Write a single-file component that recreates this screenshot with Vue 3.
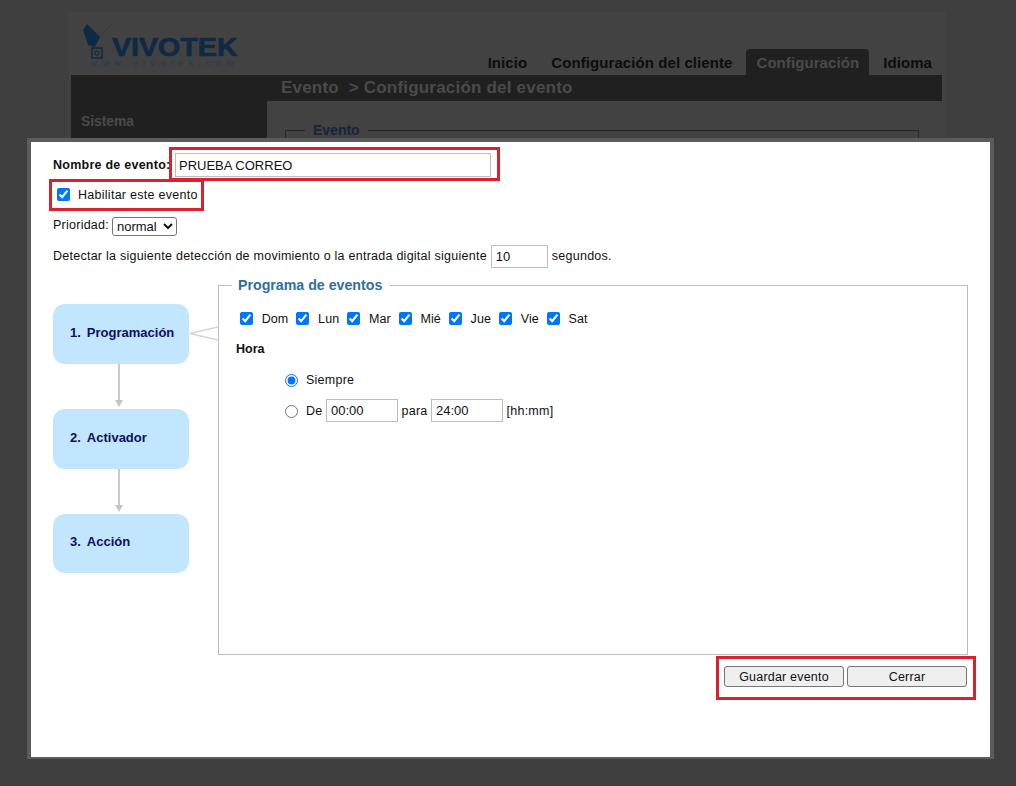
<script setup>
const tabs = [
  { label: 'Inicio', active: false },
  { label: 'Configuración del cliente', active: false },
  { label: 'Configuración', active: true },
  { label: 'Idioma', active: false },
]
const days = ['Dom', 'Lun', 'Mar', 'Mié', 'Jue', 'Vie', 'Sat']
const steps = ['Programación', 'Activador', 'Acción']
</script>

<template>
  <div class="page">
    <div class="site">
      <header class="site-head">
        <div class="logo">
          <svg class="logo-mark" width="31" height="35" viewBox="0 0 31 35">
            <path d="M2 6 L6 0 L19 13 L14 23 L7 21 Z" fill="#0e2a44" />
            <path d="M20 11 L31 0" stroke="#2c3d4c" stroke-width="1" />
            <rect x="11" y="24" width="10" height="10" fill="none" stroke="#1b3044" stroke-width="2" />
            <circle cx="16" cy="29" r="2" fill="none" stroke="#1b3044" stroke-width="1.500" />
          </svg>
          <div class="logo-words">
            <span class="logo-name">VIVOTEK</span>
            <span class="logo-url">www.vivotek.com</span>
          </div>
        </div>
        <nav class="tabs">
          <span v-for="t in tabs" :key="t.label" class="tab" :class="{ active: t.active }">{{ t.label }}</span>
        </nav>
      </header>
      <div class="crumb">Evento &nbsp;&gt; Configuración del evento</div>
      <div class="site-body">
        <aside class="side">Sistema</aside>
        <section class="under">
          <div class="under-box"><span class="under-legend">Evento</span></div>
        </section>
      </div>
    </div>

    <div class="modal">
      <div class="row-name">
        <label class="name-label">Nombre de evento:</label>
        <input class="name-input" type="text" value="PRUEBA CORREO" />
        <span class="mark mark-name"></span>
      </div>
      <div class="row-enable">
        <label class="enable"><input type="checkbox" checked /> <span>Habilitar este evento</span></label>
        <span class="mark mark-enable"></span>
      </div>
      <div class="row-priority">
        <span class="lift2">Prioridad:</span>
        <select class="priority"><option>normal</option></select>
      </div>
      <div class="row-detect">
        <span class="lift1">Detectar la siguiente detección de movimiento o la entrada digital siguiente</span>
        <input class="detect-input" type="text" value="10" />
        <span class="lift1">segundos.</span>
      </div>

      <div class="main">
        <div class="steps">
          <template v-for="(s, i) in steps" :key="s">
            <div class="step"><span class="num">{{ i + 1 }}.</span>{{ s }}</div>
            <svg v-if="i < 2" class="arrow" width="12" height="45" viewBox="0 0 12 45">
              <path d="M6 0 V37" stroke="#c9c9c5" stroke-width="2" />
              <path d="M2 36 H10 L6 43 Z" fill="#c4c4c0" />
            </svg>
          </template>
          <svg class="wedge" width="29" height="16" viewBox="0 0 29 16">
            <path d="M29 1 L1 7.500 L29 14" fill="none" stroke="#d6d6d2" stroke-width="1.500" />
          </svg>
        </div>
        <fieldset class="panel">
          <legend>Programa de eventos</legend>
          <div class="days">
            <label v-for="d in days" :key="d" class="day"><input type="checkbox" checked /><span>{{ d }}</span></label>
          </div>
          <div class="hora">Hora</div>
          <div class="times">
            <label class="time-row first"><input type="radio" name="t" checked /><span>Siempre</span></label>
            <div class="time-row">
              <input type="radio" name="t" />
              <span>De</span>
              <input class="time-input" type="text" value="00:00" />
              <span>para</span>
              <input class="time-input" type="text" value="24:00" />
              <span>[hh:mm]</span>
            </div>
          </div>
        </fieldset>
      </div>

      <div class="actions">
        <button type="button">Guardar evento</button>
        <button type="button">Cerrar</button>
        <span class="mark mark-actions"></span>
      </div>
    </div>
  </div>
</template>

<style>
html, body { margin: 0; background: #3f3f3f; }
</style>

<style scoped>
.page {
  position: relative;
  width: 1016px;
  height: 786px;
  overflow: hidden;
  background: #3f3f3f;
  font-family: "Liberation Sans", Arial, sans-serif;
  font-size: 12px;
  color: #111;
}
.site {
  margin: 12px 0 0 68px;
  width: 878px;
  height: 700px;
  background: #424242;
}
.site-head {
  display: flex;
  justify-content: space-between;
  align-items: flex-end;
  height: 63px;
  padding: 0 14px 0 13px;
}
.logo {
  display: flex;
  align-items: flex-start;
  align-self: flex-start;
  margin-top: 12px;
}
.logo-mark { flex: none; display: block; }
.logo-words { display: flex; flex-direction: column; padding-top: 14px; }
.logo-name {
  font-weight: 700;
  font-size: 26px;
  line-height: 19px;
  color: #0e2a44;
  -webkit-text-stroke: 0.700px #0e2a44;
  transform: scaleX(1.100);
  transform-origin: left;
}
.logo-url {
  font-size: 9px;
  font-weight: 700;
  line-height: 7px;
  letter-spacing: 4.900px;
  color: #2a3f52;
  margin: 3px 0 0 -22px;
  white-space: nowrap;
}
.tabs { display: flex; align-items: flex-end; color: #0d0d0d; font-weight: 700; font-size: 15px; letter-spacing: 0.080px; }
.tab { padding: 0 12px; height: 26px; line-height: 28px; }
.tab.active {
  background: #202020;
  color: #4a4a4a;
  border-radius: 4px 4px 0 0;
  padding: 0 10px;
  margin: 0 2px;
}
.tab:last-child { padding-right: 0; }
.crumb {
  margin-left: 3px;
  width: 871px;
  height: 26px;
  line-height: 25px;
  box-sizing: border-box;
  padding-left: 210px;
  background: #202020;
  color: #4a4a4a;
  font-weight: 700;
  font-size: 17px;
  letter-spacing: 0.200px;
}
.site-body { display: flex; margin-left: 3px; width: 871px; }
.side {
  width: 196px;
  height: 40px;
  box-sizing: border-box;
  padding: 13px 0 0 10px;
  background: #202020;
  color: #4a4a4a;
  font-weight: 700;
  font-size: 13.800px;
}
.under { flex: 1; padding: 29px 0 0 18px; }
.under-box {
  position: relative;
  width: 634px;
  height: 20px;
  border: 1px solid #262626;
  border-bottom: 0;
  box-sizing: border-box;
}
.under-legend {
  position: absolute;
  left: 19px;
  top: -9px;
  padding: 0 8px;
  background: #424242;
  color: #14273c;
  font-weight: 700;
  font-size: 14px;
}

.modal {
  position: absolute;
  left: 27px;
  top: 138px;
  width: 959px;
  height: 615px;
  background: #fff;
  border: solid #5c5c5c;
  border-width: 4px 4px 2px 4px;
}
.mark {
  position: absolute;
  border: 3px solid #d8222e;
  box-sizing: border-box;
  pointer-events: none;
}
.mark-name { left: 138px; top: 5px; width: 331px; height: 34px; }
.mark-enable { left: 18px; top: 37px; width: 155px; height: 32px; }
.mark-actions { left: 685px; top: 514px; width: 260px; height: 44px; }

.row-name {
  display: flex;
  align-items: center;
  height: 24px;
  padding: 11px 0 0 22px;
}
.name-label { font-weight: 700; font-size: 12.500px; letter-spacing: 0.250px; width: 122px; flex: none; }
.name-input {
  width: 316px;
  height: 24px;
  box-sizing: border-box;
  border: 1px solid #bdbdbd;
  padding: 0 3px;
  font: 13px "Liberation Sans", Arial, sans-serif;
  color: #111;
  outline: none;
  background: #fff;
}
.row-enable { padding: 9px 0 0 26px; height: 17px; }
.enable { display: inline-flex; align-items: center; gap: 8px; height: 17px; font-size: 12.500px; letter-spacing: 0.270px; }
input[type="checkbox"], input[type="radio"] { margin: 0; width: 13px; height: 13px; flex: none; }
.row-priority {
  display: flex;
  align-items: center;
  gap: 3px;
  height: 19px;
  margin-top: 14px;
  padding-left: 22px;
  font-size: 12.500px;
  letter-spacing: 0.250px;
}
.lift2 { margin-bottom: 3px; }
.lift1 { margin-bottom: 1px; }
.priority {
  width: 65px;
  height: 19px;
  font: 13px "Liberation Sans", Arial, sans-serif;
  color: #111;
  background: #fff;
  border: 1px solid #767676;
  border-radius: 3px;
  padding: 0;
}
.row-detect {
  display: flex;
  align-items: center;
  gap: 4px;
  height: 23px;
  margin-top: 9px;
  padding-left: 22px;
  font-size: 12.500px;
  letter-spacing: 0.250px;
}
.detect-input, .time-input {
  height: 23px;
  box-sizing: border-box;
  border: 1px solid #bdbdbd;
  padding: 0 4px;
  font: 13px "Liberation Sans", Arial, sans-serif;
  color: #111;
  background: #fff;
  outline: none;
}
.detect-input { width: 57px; }

.main { display: flex; align-items: flex-start; margin-top: 10px; padding-left: 22px; }
.steps { position: relative; width: 136px; flex: none; margin: 26px 29px 0 0; display: flex; flex-direction: column; }
.step {
  height: 60px;
  line-height: 57px;
  box-sizing: border-box;
  padding-left: 17px;
  background: #c2e6fe;
  border-radius: 12px;
  color: #0d0f5e;
  font-weight: 700;
  font-size: 13px;
}
.step:last-of-type { height: 59px; line-height: 55px; }
.num { margin-right: 6px; }
.arrow { display: block; margin-left: 60px; }
.wedge { position: absolute; left: 136px; top: 22px; }

.panel {
  margin: 0;
  padding: 0 0 0 17px;
  width: 750px;
  height: 377px;
  box-sizing: border-box;
  border: 1px solid #bdbdbd;
  min-width: 0;
}
legend {
  margin-left: -4px;
  padding: 0 8px 0 6px;
  color: #2f6ea5;
  font-weight: 700;
  font-size: 14.200px;
  line-height: 15px;
}
.days { display: flex; gap: 8px; margin: 17px 0 0 4px; font-size: 12.500px; letter-spacing: 0.100px; }
.day { display: inline-flex; align-items: center; gap: 8.700px; height: 17px; }
.hora { margin-top: 14px; font-weight: 700; font-size: 12.500px; height: 16px; line-height: 16px; }
.times { margin: 14px 0 0 49px; font-size: 12.500px; letter-spacing: 0.250px; }
.time-row { display: flex; align-items: center; gap: 3.500px; height: 23px; }
.time-row > input[type="radio"] { margin: 2px 4.500px 0 0; }
.time-row.first { height: 17px; margin-bottom: 11px; }
.time-input { width: 72px; }
.actions {
  display: flex;
  justify-content: flex-end;
  gap: 3px;
  margin-top: 11px;
  padding-right: 23px;
}
button {
  width: 120px;
  height: 21px;
  padding: 0;
  background: #efefef;
  border: 1px solid #767676;
  border-radius: 3px;
  font: 12.500px "Liberation Sans", Arial, sans-serif;
  letter-spacing: 0.200px;
  color: #111;
}
</style>
